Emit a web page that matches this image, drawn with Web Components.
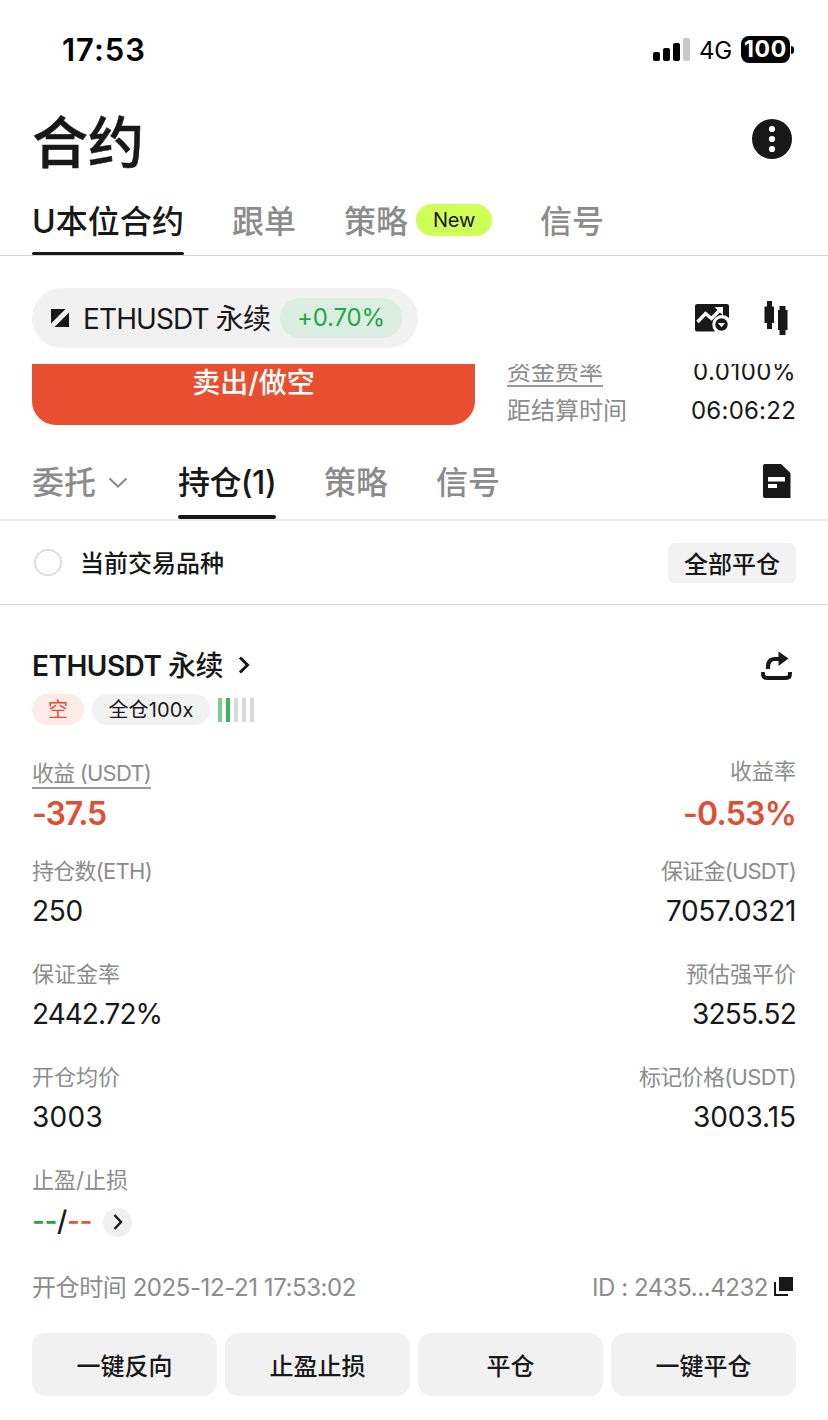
<!DOCTYPE html>
<html lang="zh-CN">
<head>
<meta charset="utf-8">
<title>合约</title>
<style>
  body {
    margin: 0;
    width: 828px;
    height: 1420px;
    overflow: hidden;
    background: #fff;
    color: #181818;
    font-family: Inter, "Noto Sans CJK SC", sans-serif;
  }
</style>
</head>
<body>
<futures-page></futures-page>

<script>
const define = (name, html, setup) => {
  const template = document.createElement('template');
  template.innerHTML = html;
  customElements.define(name, class extends HTMLElement {
    constructor() {
      super();
      this.attachShadow({ mode: 'open' });
      this.shadowRoot.appendChild(template.content.cloneNode(true));
    }
    connectedCallback() {
      if (setup) setup(this, this.shadowRoot);
    }
  });
};

define('status-bar', `
<style>
  :host { display: flex; align-items: center; height: 99px; box-sizing: border-box; padding: 0 34px 0 62px; color: #000; }
  .time { font-size: 31px; font-weight: 600; line-height: 40px; flex: 1; }
  .net { font-size: 24px; line-height: 30px; font-weight: 400; margin: 2px 9px 0 9px; }
  .battery { width: 49px; height: 27px; border-radius: 8px; background: #000; color: #fff; font-size: 23px; font-weight: 700; line-height: 27px; display: flex; justify-content: center; }
  .nub { width: 3px; height: 8px; border-radius: 0 4px 4px 0; background: #000; margin-left: 1px; }
  svg { display: block; }
</style>
<div class="time"><fit-text w="84">17:53</fit-text></div>
<svg width="37" height="24" viewBox="0 0 37 24">
  <rect x="0" y="14" width="7" height="9" rx="2"/><rect x="10" y="10" width="7" height="13" rx="2"/>
  <rect x="20" y="5" width="7" height="18" rx="2"/><rect x="30" y="0" width="7" height="23" rx="2" fill="#c8c8c8"/>
</svg>
<div class="net"><fit-text w="33">4G</fit-text></div>
<div class="battery"><fit-text w="43">100</fit-text></div>
<div class="nub"></div>
`);

define('page-header', `
<style>
  :host { display: flex; align-items: center; justify-content: space-between; height: 82px; padding: 0 36px 0 32px; }
  h1 { margin: 5px 0 0; font-size: 56px; font-weight: 500; line-height: 80px; -webkit-text-stroke: .5px; }
  svg { display: block; margin-top: -3px; }
</style>
<h1><slot></slot></h1>
<svg width="40" height="40" viewBox="0 0 40 40">
  <circle cx="20" cy="20" r="20" fill="#181818"/>
  <g fill="#fff"><circle cx="20" cy="10" r="3.1"/><circle cx="20" cy="20" r="3.1"/><circle cx="20" cy="30" r="3.1"/></g>
</svg>
`);

define('tab-bar', `
<style>
  :host { display: flex; align-items: stretch; box-sizing: border-box; height: var(--bar-height, 70px); padding: 0 32px; border-bottom: var(--bar-line, 1px solid #d3d3d3); }
</style>
<slot></slot>
`);

define('tab-item', `
<style>
  :host { display: flex; flex-direction: column; box-sizing: border-box; font-size: 32px; line-height: 48px; font-weight: 500; color: #8c8c8c; white-space: nowrap; }
  .label { flex: 1; display: flex; align-items: center; padding-top: 5px; }
  .mark { height: var(--mark, 3px); border-radius: 2px; }
  :host([active]) { color: #181818; }
  :host([active]) .mark { background: #181818; }
</style>
<div class="label"><slot></slot></div>
<div class="mark"></div>
`);

define('new-badge', `
<style>
  :host { display: flex; align-items: center; justify-content: center; width: 76px; height: 32px; border-radius: 16px; background: #cfff57; color: #181818; font-size: 20px; line-height: 32px; font-weight: 400; margin: -3px 0 0 8px; }
</style>
<slot></slot>
`);

define('pair-bar', `
<style>
  :host { display: flex; align-items: center; box-sizing: border-box; height: 108px; padding: 32px 38px 16px 32px; }
  .pill { display: flex; align-items: center; width: 386px; height: 60px; box-sizing: border-box; border-radius: 30px; background: #f1f1f1; padding: 0 16px 0 19px; font-size: 28px; line-height: 40px; margin-right: auto; }
  .pair { margin-top: 2px; }
  .change { display: flex; align-items: center; justify-content: center; width: 122px; height: 40px; border-radius: 20px; background: #dcede1; color: #1fa648; font-size: 24px; line-height: 42px; margin-left: auto; }
  svg { display: block; }
  .switch { margin-right: 14px; }
  .candles { margin-left: 35px; }
</style>
<div class="pill">
  <svg class="switch" width="18" height="18" viewBox="0 0 18 18" fill="#181818"><path d="M0 0H14.5L0 14.5Z"/><path d="M18 3.5V18H3.5Z"/></svg>
  <fit-text class="pair" w="187">ETHUSDT 永续</fit-text>
  <div class="change"><fit-text w="88">+0.70%</fit-text></div>
</div>
<svg width="34" height="28" viewBox="0 0 34 28">
  <path d="M2 0H32Q34 0 34 2V14A8.5 8.5 0 0 0 20 27.5H2Q0 27.500 0 25.500V2Q0 0 2 0Z" fill="#181818"/>
  <path d="M2.500 18L10.500 9.500L16.500 14.500L24.500 6.500" fill="none" stroke="#fff" stroke-width="3.400"/>
  <path d="M19.500 3H28V11.500Z" fill="#fff"/>
  <circle cx="26.500" cy="20.500" r="8.600" fill="#fff"/>
  <circle cx="26.500" cy="20.500" r="6.200" fill="#181818"/>
  <path d="M22.800 19H30.200L26.500 23.200Z" fill="#fff"/>
</svg>
<svg class="candles" width="26" height="36" viewBox="0 0 26 36" fill="#181818">
  <path d="M3 1H8V6.500H10V23H8V29H3V23H.5V6.500H3Z"/>
  <path d="M15.500 6H21.500V10H23.500V30H21.500V35H15.500V30H14V10H15.500Z"/>
</svg>
`);

// Bottom edge of the order form, scrolled under the pair bar.
define('order-peek', `
<style>
  :host { display: flex; align-items: flex-end; height: 61px; overflow: hidden; padding: 0 32px; }
  .sell { flex: none; box-sizing: border-box; width: 443px; height: 86px; border-radius: 24px; background: #e84f31; color: #fff; font-size: 28px; line-height: 88px; font-weight: 500; text-align: center; }
  .info { flex: 1; margin-left: 32px; font-size: 24px; line-height: 31px; }
  .row { display: flex; justify-content: space-between; height: 30px; color: #8c8c8c; }
  .row + .row { margin-top: 9px; }
  .num { color: #181818; }
  .under { height: 29px; border-bottom: 2px solid #999; }
</style>
<div class="sell">卖出/做空</div>
<div class="info">
  <div class="row"><span class="under">资金费率</span><fit-text class="num" w="103">0.0100%</fit-text></div>
  <div class="row"><span>距结算时间</span><fit-text class="num" w="105">06:06:22</fit-text></div>
</div>
`);

define('filter-row', `
<style>
  :host { display: flex; align-items: center; box-sizing: border-box; height: 84px; padding: 0 32px 0 34px; border-bottom: 1px solid #d6d6d6; font-size: 24px; line-height: 36px; font-weight: 500; }
  .radio { box-sizing: border-box; width: 28px; height: 27px; border: 2px solid #dedede; border-radius: 50%; margin: -1px 18px 0 0; }
  .name { margin-top: 3px; }
  .close { width: 128px; height: 40px; line-height: 43px; border-radius: 6px; background: #f2f2f2; text-align: center; margin-left: auto; }
</style>
<span class="radio"></span><span class="name">当前交易品种</span><span class="close">全部平仓</span>
`);

define('metric-cell', `
<style>
  :host { display: flex; flex-direction: column; align-items: flex-start; }
  :host([end]) { align-items: flex-end; }
  .label { font-size: 22px; line-height: 30px; height: 30px; color: #8c8c8c; }
  :host([underline]) .label { border-bottom: 2px solid #999; box-sizing: border-box; height: 31px; margin-bottom: -1px; }
  :host([loss]:not([underline])) .label { line-height: 27px; }
  .value { display: flex; align-items: center; font-size: 28px; height: 50px; line-height: 50px; }
  :host([loss]) .value { color: #de4f36; font-size: 32px; font-weight: 600; height: 51px; line-height: 51px; }
</style>
<div class="label"><slot name="label"></slot></div>
<div class="value"><slot></slot></div>
`);

define('action-button', `
<style>
  :host { flex: 1; height: 63px; line-height: 67px; border-radius: 14px; background: #f1f1f1; text-align: center; font-size: 24px; font-weight: 500; }
</style>
<slot></slot>
`);

define('risk-bars', `
<style>
  :host { display: flex; gap: 4px; height: 24px; margin-left: 8px; }
  i { width: 4px; background: #d9d9d9; }
  .a { background: #7fce91; }
  .b { background: #3fb559; }
</style>
<i class="a"></i><i class="b"></i><i></i><i></i><i></i>
`);

define('position-card', `
<style>
  :host { display: block; padding: 39px 32px 0; }
  svg { display: block; }
  .title { display: flex; align-items: center; height: 44px; font-size: 28px; line-height: 45px; font-weight: 600; }
  .cn { font-weight: 500; }
  .share { margin: 0 4px 0 auto; }
  .tags { display: flex; align-items: center; height: 31px; margin-top: 6px; font-size: 20px; line-height: 33px; }
  .side { width: 52px; height: 31px; border-radius: 16px; background: #fdebe8; color: #de4f36; text-align: center; }
  .mode { display: flex; justify-content: center; width: 118px; height: 31px; border-radius: 16px; background: #f2f2f2; margin-left: 8px; }
  .line { display: flex; justify-content: space-between; margin-top: 23px; }
  .line.first { margin-top: 33px; }
  .line.second { margin-top: 17px; }
  .g { color: #22a447; }
  .r { color: #e4583f; }
  .stops { font-weight: 500; margin-top: 2px; }
  .go { display: flex; align-items: center; justify-content: center; width: 29px; height: 29px; border-radius: 50%; background: #f0f0f0; margin: 4px 0 0 11px; }
  .foot { display: flex; align-items: center; height: 36px; margin-top: 24px; font-size: 24px; line-height: 37px; color: #8c8c8c; }
  .copy { margin: -2px 3px 0 6px; }
  .id { margin-left: auto; }
  .actions { display: flex; gap: 8px; margin-top: 28px; }
</style>
<div class="title">
  <fit-text w="191">ETHUSDT <span class="cn">永续</span></fit-text>
  <svg width="12" height="18" viewBox="0 0 12 18" style="margin:-2px 0 0 15px"><path d="M2 1.500L9.500 9L2 16.500" fill="none" stroke="#181818" stroke-width="3"/></svg>
  <svg class="share" width="32" height="30" viewBox="0 0 32 30">
    <path d="M8 18V16Q8 8 15 8H19" fill="none" stroke="#181818" stroke-width="4.200"/>
    <path d="M18.500 .5L28.500 7.500L18.500 15Z" fill="#181818"/>
    <path d="M3 21V23Q3 27 7 27H26Q30 27 30 23V21" fill="none" stroke="#181818" stroke-width="3.800"/>
  </svg>
</div>
<div class="tags">
  <span class="side">空</span>
  <span class="mode"><fit-text w="85">全仓100x</fit-text></span>
  <risk-bars></risk-bars>
</div>
<div class="line first">
  <metric-cell underline loss><fit-text slot="label" w="119">收益 (USDT)</fit-text><fit-text w="74">-37.5</fit-text></metric-cell>
  <metric-cell end loss><span slot="label">收益率</span><fit-text w="113">-0.53%</fit-text></metric-cell>
</div>
<div class="line second">
  <metric-cell><fit-text slot="label" w="120">持仓数(ETH)</fit-text><fit-text w="51">250</fit-text></metric-cell>
  <metric-cell end><fit-text slot="label" w="135">保证金(USDT)</fit-text><fit-text w="130">7057.0321</fit-text></metric-cell>
</div>
<div class="line">
  <metric-cell><span slot="label">保证金率</span><fit-text w="130">2442.72%</fit-text></metric-cell>
  <metric-cell end><span slot="label">预估强平价</span><fit-text w="104">3255.52</fit-text></metric-cell>
</div>
<div class="line">
  <metric-cell><span slot="label">开仓均价</span><fit-text w="71">3003</fit-text></metric-cell>
  <metric-cell end><fit-text slot="label" w="157">标记价格(USDT)</fit-text><fit-text w="103">3003.15</fit-text></metric-cell>
</div>
<div class="line">
  <metric-cell><fit-text slot="label" w="96">止盈/止损</fit-text><fit-text class="stops" w="60"><span class="g">--</span>/<span class="r">--</span></fit-text>
    <span class="go"><svg width="10" height="18" viewBox="0 0 10 18"><path d="M1.500 2L8 9L1.500 16" fill="none" stroke="#181818" stroke-width="2.400"/></svg></span>
  </metric-cell>
</div>
<div class="foot">
  <fit-text w="324">开仓时间 2025-12-21 17:53:02</fit-text>
  <fit-text class="id" w="176">ID : 2435...4232</fit-text>
  <svg class="copy" width="19" height="19" viewBox="0 0 19 19" fill="#181818"><rect x="5" width="14" height="14"/><path d="M0 5H2V17H14V19H0Z"/></svg>
</div>
<div class="actions">
  <action-button>一键反向</action-button>
  <action-button>止盈止损</action-button>
  <action-button>平仓</action-button>
  <action-button>一键平仓</action-button>
</div>
`);

define('futures-page', `
<style>
  :host { display: flex; flex-direction: column; }
  .main { margin-top: 5px; }
  .sub { margin-top: 20px; --bar-height: 76px; --bar-line: 2px solid #eee; --mark: 4px; }
  svg { display: block; }
</style>
<status-bar></status-bar>
<page-header>合约</page-header>
<tab-bar class="main">
  <tab-item active><fit-text w="152">U本位合约</fit-text></tab-item>
  <tab-item style="margin-left:48px">跟单</tab-item>
  <tab-item style="margin-left:48px">策略<new-badge><fit-text w="42">New</fit-text></new-badge></tab-item>
  <tab-item style="margin-left:48px">信号</tab-item>
</tab-bar>
<pair-bar></pair-bar>
<order-peek></order-peek>
<tab-bar class="sub">
  <tab-item>委托<svg width="20" height="12" viewBox="0 0 20 12" style="margin-left:12px"><path d="M1.500 1.500L10 9.500L18.500 1.500" fill="none" stroke="#8c8c8c" stroke-width="2.200"/></svg></tab-item>
  <tab-item active style="margin-left:50px"><fit-text w="98">持仓(1)</fit-text></tab-item>
  <tab-item style="margin-left:48px">策略</tab-item>
  <tab-item style="margin-left:48px">信号</tab-item>
  <svg width="28" height="34" viewBox="0 0 28 34" style="margin:19px 5px 0 auto"><path d="M2 0H18L27.500 9V34H2Q0 34 0 32V2Q0 0 2 0Z" fill="#181818"/><path d="M5 13H22V17.500H5ZM5 20H14V24H5Z" fill="#fff"/></svg>
</tab-bar>
<filter-row></filter-row>
<position-card></position-card>
`);

// Tracks its text so that the line takes exactly w pixels.
define('fit-text', `
<style>
  :host { display: inline-block; flex: none; white-space: nowrap; }
  span { display: inline-block; }
</style>
<span><slot></slot></span>
`, (host, root) => {
  const span = root.querySelector('span');
  const w = Number(host.getAttribute('w'));
  const gaps = host.textContent.length;
  span.style.letterSpacing = `${(w - span.getBoundingClientRect().width) / gaps}px`;
  host.style.width = `${w}px`;
});
</script>
</body>
</html>
